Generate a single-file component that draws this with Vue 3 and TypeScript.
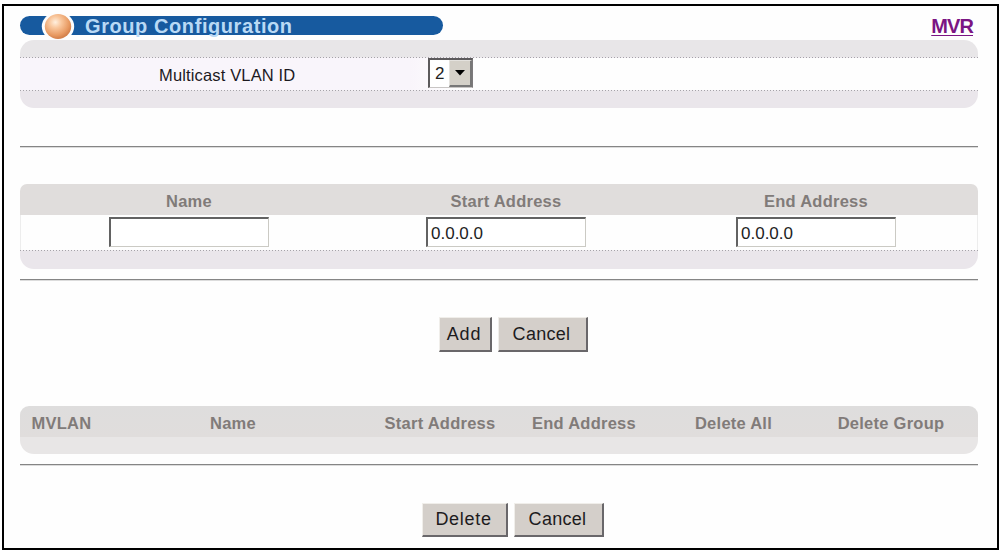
<script setup lang="ts">
import { ref } from 'vue'

interface AddressField {
  label: string
  value: string
}

const vlanId = ref<string>('2')
const fields = ref<AddressField[]>([
  { label: 'Name', value: '' },
  { label: 'Start Address', value: '0.0.0.0' },
  { label: 'End Address', value: '0.0.0.0' },
])
const columns: string[] = ['MVLAN', 'Name', 'Start Address', 'End Address', 'Delete All', 'Delete Group']
</script>

<template>
  <main class="frame">
    <header class="top">
      <div class="title-bar">
        <svg class="ball" width="34" height="27" viewBox="0 0 34 27">
          <defs>
            <radialGradient id="ballFill" cx="0.4" cy="0.33" r="0.65">
              <stop offset="0" stop-color="#fff0df" />
              <stop offset="0.35" stop-color="#f9c79d" />
              <stop offset="0.8" stop-color="#e89a62" />
              <stop offset="1" stop-color="#d5824c" />
            </radialGradient>
          </defs>
          <ellipse cx="17" cy="13.5" rx="16.2" ry="14.5" fill="#fdfdfd" />
          <ellipse cx="17" cy="13.5" rx="13.2" ry="12.5" fill="url(#ballFill)" />
        </svg>
        <h1>Group Configuration</h1>
      </div>
      <a class="mvr">MVR</a>
    </header>

    <section class="panel vlan">
      <div class="band"></div>
      <div class="dots"></div>
      <div class="vlan-row">
        <label class="vlan-label">Multicast VLAN ID</label>
        <div class="select">
          <span class="select-value">{{ vlanId }}</span>
          <span class="arrow">
            <svg width="10" height="6" viewBox="0 0 10 6"><path d="M0 0H10L5 5.5Z" fill="#000" /></svg>
          </span>
        </div>
      </div>
      <div class="dots"></div>
      <div class="band"></div>
    </section>

    <div class="rule rule-a"></div>

    <section class="panel entry">
      <div class="entry-grid head entry-head">
        <span v-for="f in fields" :key="f.label">{{ f.label }}</span>
      </div>
      <div class="entry-grid entry-row">
        <div v-for="f in fields" :key="f.label"><input v-model="f.value" type="text" /></div>
      </div>
      <div class="dots"></div>
      <div class="band"></div>
    </section>

    <div class="rule rule-b"></div>

    <div class="buttons add-row">
      <button class="add">Add</button>
      <button class="cancel">Cancel</button>
    </div>

    <section class="panel list">
      <div class="list-grid head">
        <span v-for="c in columns" :key="c">{{ c }}</span>
      </div>
      <div class="band gray"></div>
    </section>

    <div class="rule rule-c"></div>

    <div class="buttons delete-row">
      <button class="delete">Delete</button>
      <button class="cancel">Cancel</button>
    </div>
  </main>
</template>

<style>
body {
  background: #fff;
}
</style>

<style scoped>
.frame {
  box-sizing: border-box;
  width: 997px;
  height: 546px;
  margin: 4px 0 0 2px;
  padding: 10px 19px 0 16px;
  border: 2px solid #000;
  background: #fefefe;
  font-family: 'Liberation Sans', Arial, sans-serif;
  overflow: hidden;
  display: flex;
  flex-direction: column;
}
.top {
  display: flex;
  justify-content: space-between;
  height: 24px;
  flex: none;
}
.title-bar {
  box-sizing: border-box;
  display: flex;
  align-items: center;
  width: 423px;
  height: 19px;
  padding-left: 21px;
  border-radius: 10px;
  background: #175a9f;
}
.ball {
  flex: none;
  margin-top: 1px;
}
h1 {
  margin: 1px 0 0 10px;
  font-size: 20px;
  line-height: 20px;
  letter-spacing: 0.58px;
  color: #b9d9f5;
  white-space: nowrap;
}
.mvr {
  margin-right: 5px;
  font-size: 20px;
  line-height: 20px;
  font-weight: bold;
  letter-spacing: -0.9px;
  color: #7b1583;
  text-decoration: underline;
  text-decoration-thickness: 1px;
  text-underline-offset: 2px;
}
.panel {
  width: 958px;
  overflow: hidden;
  flex: none;
}
.vlan {
  border-radius: 14px;
}
.band {
  height: 17px;
  background: #eae6eb;
}
.vlan .band:first-child {
  background: #e8e6e8;
}
.band.gray {
  background: #e8e6e6;
}
.dots {
  height: 1px;
  background: repeating-linear-gradient(90deg, #a5a2a8 0, #a5a2a8 1px, #efecf0 1px, #efecf0 3px);
}
.vlan-row {
  height: 32px;
  display: flex;
  background: linear-gradient(90deg, #f9f5fb 0, #f9f5fb 390px, #fefefe 440px);
}
.vlan-label {
  width: 408px;
  padding-left: 139px;
  box-sizing: border-box;
  font-size: 16.5px;
  line-height: 34px;
  letter-spacing: 0.15px;
  color: #1c191f;
}
.select {
  box-sizing: border-box;
  display: flex;
  width: 45px;
  height: 30px;
  border: solid;
  border-width: 2px 1px 1px 2px;
  border-color: #5c5a5c #7c7a7c #c8c5c4 #5c5a5c;
  background: #fff;
}
.select-value {
  width: 19px;
  padding-left: 5px;
  box-sizing: border-box;
  font-size: 17px;
  line-height: 28px;
  color: #222;
}
.arrow {
  flex: 1;
  display: flex;
  align-items: center;
  justify-content: center;
  box-sizing: border-box;
  border: solid;
  border-width: 1px 2px 2px 1px;
  border-color: #e4e2de #777 #777 #e4e2de;
  background: #d4d0c8;
}
.rule {
  height: 1px;
  width: 958px;
  flex: none;
  background: #858585;
  box-shadow: 0 1px 0 #dcdcdc;
}
.rule-a {
  margin: 38px 0 37px;
}
.rule-b {
  margin: 10px 0 37px;
}
.rule-c {
  margin: 10px 0 38px;
}
.entry {
  border-radius: 7px 7px 14px 14px;
}
.head {
  background: #e0dddc;
  color: #817b79;
  font-size: 16.5px;
  font-weight: bold;
  text-align: center;
  white-space: nowrap;
  letter-spacing: 0.25px;
}
.entry-grid {
  display: grid;
  grid-template-columns: 338px 296px 324px;
}
.entry-head {
  height: 31px;
  line-height: 35px;
}
.entry-row {
  height: 35px;
  text-align: center;
  box-shadow: inset 1px 0 #ededed, inset -1px 0 #ededed;
}
.entry .band {
  height: 18px;
}
.entry-row div {
  display: flex;
  justify-content: center;
  padding-top: 2px;
}
input {
  box-sizing: border-box;
  width: 160px;
  height: 30px;
  padding: 2px 0 0 3px;
  border: solid;
  border-width: 2px 1px 1px 2px;
  border-color: #626262 #cbcac4 #cbcac4 #626262;
  border-radius: 0;
  background: #fff;
  color: #222;
  font: 17px 'Liberation Sans', Arial, sans-serif;
  outline: none;
}
.buttons {
  display: flex;
  gap: 6px;
  flex: none;
}
.add-row {
  height: 35px;
  margin-left: 419px;
  margin-bottom: 54px;
}
.delete-row {
  height: 34px;
  margin-left: 402px;
}
button {
  box-sizing: border-box;
  height: 100%;
  padding: 0 2px 0 0;
  border: solid;
  border-width: 1px 2px 2px 1px;
  border-color: #f0eeea #69676a #69676a #f0eeea;
  border-radius: 0;
  background: #d4cfca;
  color: #1d1b1d;
  font: 18px 'Liberation Sans', Arial, sans-serif;
}
.add {
  width: 53px;
  letter-spacing: 0.8px;
}
.cancel {
  width: 90px;
  letter-spacing: 0.3px;
}
.delete {
  width: 86px;
  letter-spacing: 0.7px;
}
.list {
  border-radius: 9px 9px 14px 14px;
}
.list-grid {
  display: grid;
  grid-template-columns: 83px 260px 154px 134px 165px 150px;
  height: 31px;
  line-height: 34px;
  background: linear-gradient(#dedddd, #e0dddc);
}
</style>
